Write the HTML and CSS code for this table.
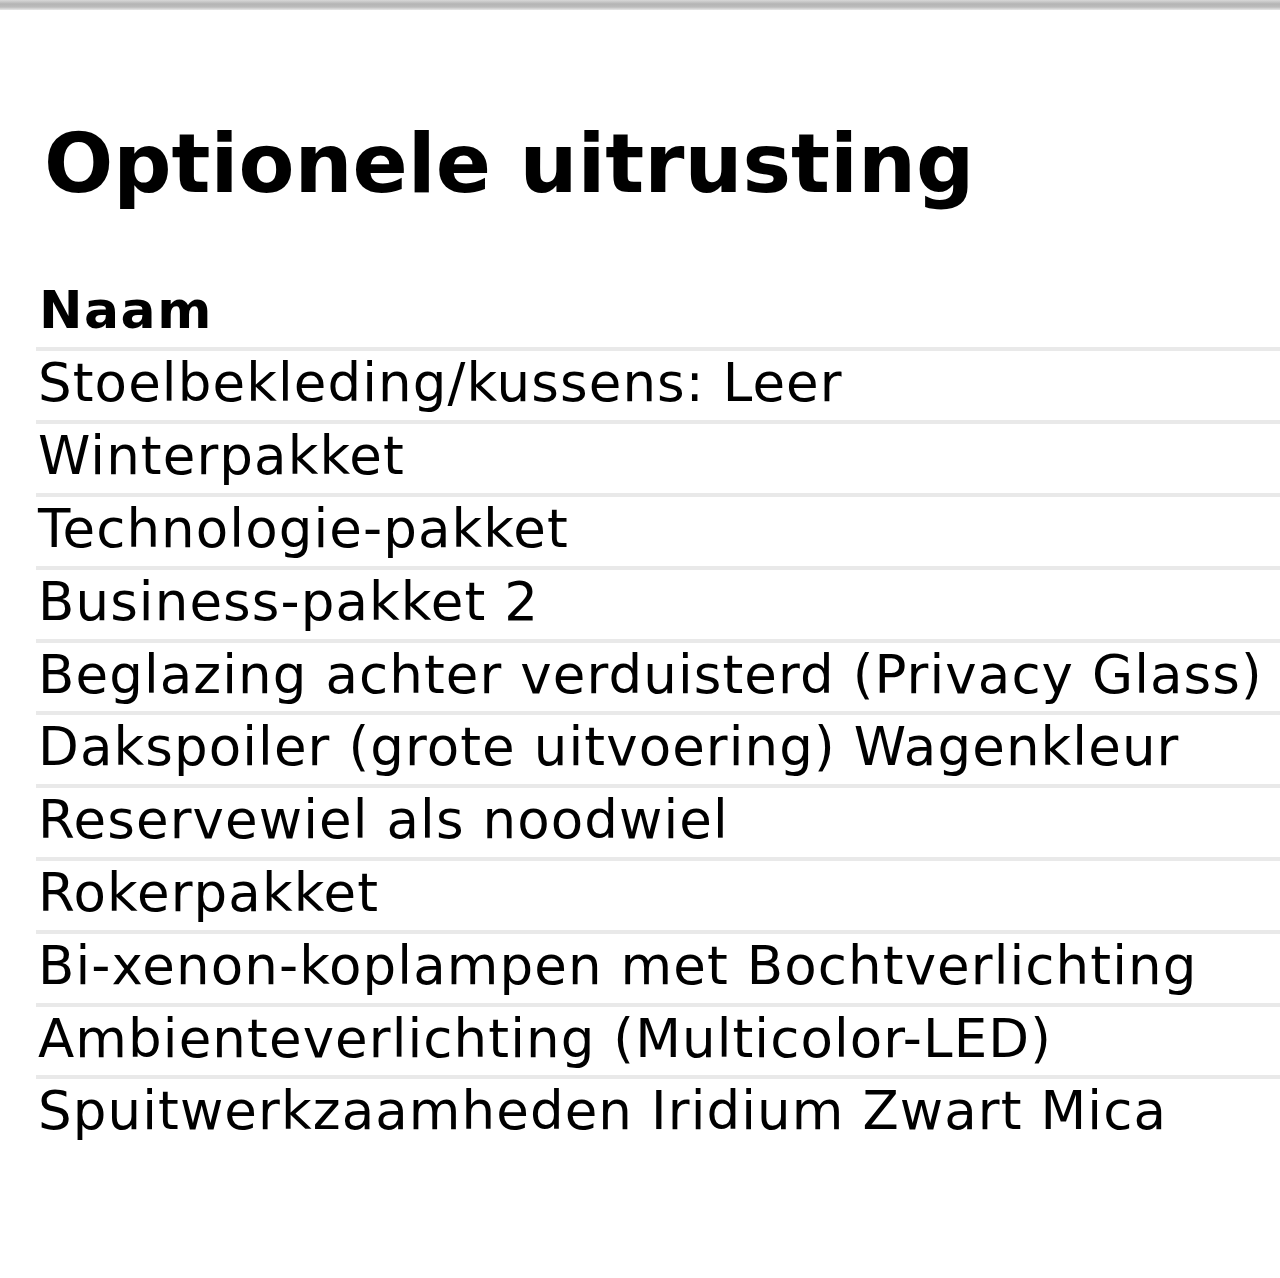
FILE: index.html
```html
<!DOCTYPE html>
<html lang="nl">
<head>
<meta charset="utf-8">
<title>Optionele uitrusting</title>
<link rel="stylesheet" href="styles.css">
</head>
<body>
<div class="topbar"></div>
<h1 class="title">Optionele uitrusting</h1>
<div class="table">
  <div class="row head">Naam</div>
  <div class="row">Stoelbekleding/kussens: Leer</div>
  <div class="row">Winterpakket</div>
  <div class="row">Technologie-pakket</div>
  <div class="row">Business-pakket 2</div>
  <div class="row">Beglazing achter verduisterd (Privacy Glass)</div>
  <div class="row">Dakspoiler (grote uitvoering) Wagenkleur</div>
  <div class="row">Reservewiel als noodwiel</div>
  <div class="row">Rokerpakket</div>
  <div class="row">Bi-xenon-koplampen met Bochtverlichting</div>
  <div class="row">Ambienteverlichting (Multicolor-LED)</div>
  <div class="row last">Spuitwerkzaamheden Iridium Zwart Mica</div>
</div>
</body>
</html>
```
FILE: styles.css
```css
html, body {
  margin: 0;
  padding: 0;
  background: #ffffff;
  overflow: hidden;
}
body {
  font-family: "DejaVu Sans", Verdana, sans-serif;
  color: #000;
  width: 1280px;
  height: 1278px;
}
.topbar {
  height: 10px;
  background: linear-gradient(to bottom, #d8d8d8 0%, #b4b4b4 40%, #bcbcbc 70%, #e8e8e8 100%);
}
.title {
  margin: 0;
  padding: 106px 0 0 44px;
  font-size: 81.5px;
  font-weight: bold;
  line-height: 95px;
  white-space: nowrap;
}
.table {
  margin: 70px 0 0 36px;
}
.row {
  font-size: 53px;
  letter-spacing: 1.1px;
  line-height: 63px;
  height: 68.8px;
  padding-left: 2px;
  border-bottom: 4px solid #e9e9e9;
  white-space: nowrap;
}
.row.head {
  font-size: 52px;
  font-weight: bold;
  letter-spacing: 1.5px;
  line-height: 58px;
  height: 66.4px;
  padding-left: 3px;
}
.row.last {
  border-bottom: none;
}
```
